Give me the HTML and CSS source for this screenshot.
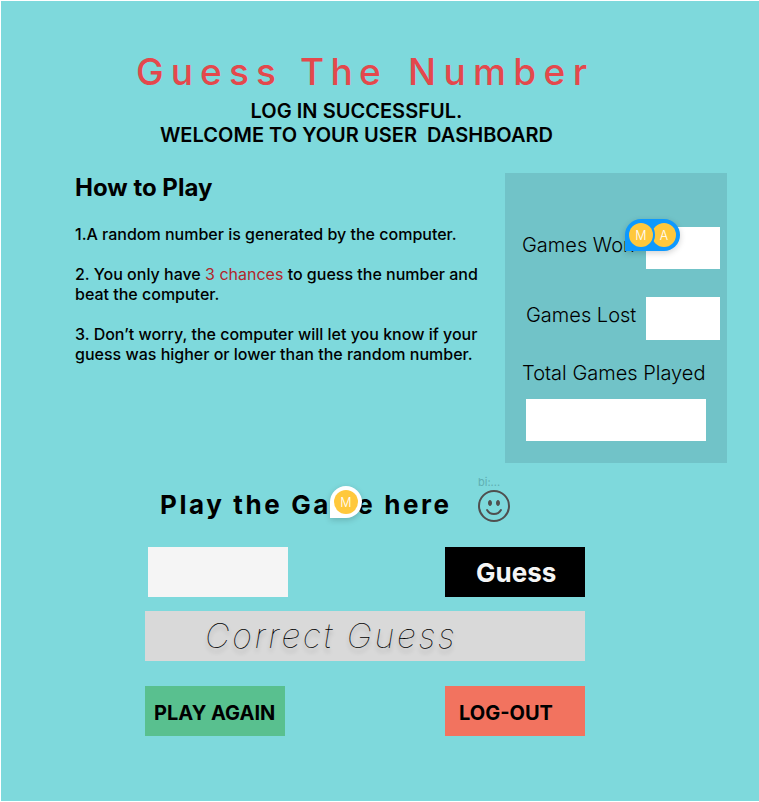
FILE: index.html
```
<!DOCTYPE html>
<html lang="en">
<head>
<meta charset="utf-8">
<title>Guess The Number</title>
<link rel="stylesheet" href="styles.css">
</head>
<body>
<div class="page">
  <header>
    <h1 class="title"><span class="w1">Guess</span><span class="w2">The</span><span class="w3">Number</span></h1>
    <p class="welcome">LOG IN SUCCESSFUL.<br>WELCOME TO YOUR USER&nbsp; DASHBOARD</p>
  </header>
  <section class="info">
    <div class="rules">
      <h2>How to Play</h2>
      <p>1.A random number is generated by the computer.</p>
      <p>2. You only have <span class="hot">3 chances</span> to guess the number and<br>beat the computer.</p>
      <p>3. Don’t worry, the computer will let you know if your<br>guess was higher or lower than the random number.</p>
    </div>
    <aside class="stats">
      <div class="stat won"><span>Games Won</span><div class="box"></div>
        <div class="pin pair"><b class="face">M</b><b class="face second">A</b></div>
      </div>
      <div class="stat lost"><span>Games Lost</span><div class="box"></div></div>
      <div class="total">Total Games Played</div>
      <div class="box wide"></div>
    </aside>
  </section>
  <section class="play">
    <div class="play-head">
      <h2>Play the Game here</h2>
      <div class="pin single"><b class="face">M</b></div>
      <div class="smile">
        <span>bi:...</span>
        <svg width="32" height="32" viewBox="0 0 16 16" fill="#4f4f4f"><path d="M8 15A7 7 0 1 1 8 1a7 7 0 0 1 0 14m0 1A8 8 0 1 0 8 0a8 8 0 0 0 0 16"/><path d="M4.285 9.567a.5.5 0 0 1 .683.183A3.5 3.5 0 0 0 8 11.5a3.5 3.5 0 0 0 3.032-1.75.5.5 0 1 1 .866.5A4.5 4.5 0 0 1 8 12.5a4.5 4.5 0 0 1-3.898-2.25.5.5 0 0 1 .183-.683M7 6.5C7 7.328 6.552 8 6 8s-1-.672-1-1.500S5.448 5 6 5s1 .672 1 1.500m4 0c0 .828-.448 1.500-1 1.500s-1-.672-1-1.500S9.448 5 10 5s1 .672 1 1.500"/></svg>
      </div>
    </div>
    <div class="row">
      <div class="entry"></div>
      <div class="btn guess">Guess</div>
    </div>
    <div class="result"><span>Correct Guess</span></div>
    <div class="row">
      <div class="btn again">PLAY AGAIN</div>
      <div class="btn logout">LOG-OUT</div>
    </div>
  </section>
</div>
</body>
</html>
```
FILE: styles.css
```
* { box-sizing: border-box; }
body { margin: 0; background: #fff; font-family: Inter, "Liberation Sans", sans-serif; color: #000; }
h1, h2, p { margin: 0; }
.page { width: 759px; height: 802px; border: solid #fff; border-width: 1px 0 1px 1px; background: #7ed9dc; overflow: hidden; }
header { height: 172px; padding-top: 48px; }
.title { display: flex; height: 48px; margin-left: 135px; font-size: 37px; line-height: 46px; font-weight: 500; color: #e4484c; white-space: nowrap; }
.w1 { width: 164px; letter-spacing: 7.1px; }
.w2 { width: 108px; letter-spacing: 6.3px; }
.w3 { letter-spacing: 7.4px; }
.welcome { width: 711px; margin-top: 2px; text-align: center; font-size: 20px; line-height: 24px; font-weight: 600; letter-spacing: .03px; white-space: nowrap; }
.info { display: flex; height: 290px; padding-left: 74px; }
.rules { width: 430px; font-size: 16px; line-height: 20px; font-weight: 500; white-space: nowrap; }
.rules h2 { height: 51px; font-size: 24px; line-height: 30px; font-weight: 700; }
.rules p { margin-bottom: 20px; }
.hot { color: #b3262b; font-weight: 400; }
.stats { width: 222px; height: 290px; padding-top: 54px; background: #71c3c8; font-size: 20px; font-weight: 300; }
.stat { position: relative; display: flex; justify-content: space-between; padding-right: 7px; line-height: 36px; white-space: nowrap; }
.won { height: 70px; padding-left: 17px; }
.lost { height: 64px; padding-left: 21px; }
.box { width: 74px; height: 42px; background: #fff; }
.lost .box { height: 43px; }
.total { height: 38px; padding-left: 17px; line-height: 24px; white-space: nowrap; }
.wide { width: 180px; margin-left: 21px; }
.pin { position: absolute; display: flex; align-items: center; height: 32px; padding: 4px; border-radius: 16px 16px 16px 0; box-shadow: 0 2px 6px rgba(0,0,0,.18); }
.pair { left: 120px; top: -8px; width: 55px; background: #0d99ff; }
.single { left: 329px; top: 23px; width: 32px; background: #fff; }
.face { position: relative; z-index: 1; flex: none; width: 24px; height: 24px; border-radius: 50%; background: #ffc83c; color: #fff; font-size: 12.5px; line-height: 25px; font-weight: 300; text-align: center; }
.second { z-index: 0; margin-left: -1px; }
.pair .face:first-child { box-shadow: 0 0 0 2px #0d99ff; }
.play-head { position: relative; display: flex; height: 84px; padding-left: 159px; }
.play-head h2 { width: 318px; padding-top: 26px; font-size: 26px; line-height: 32px; font-weight: 700; letter-spacing: 2.6px; white-space: nowrap; }
.smile { padding-top: 13px; font-size: 11px; line-height: 12px; color: #5fafb3; }
.smile span { display: block; height: 14px; }
.smile svg { display: block; }
.row { display: flex; justify-content: space-between; width: 440px; margin-left: 144px; }
.entry { width: 140px; height: 50px; margin-left: 3px; background: #f5f5f5; }
.btn { width: 140px; height: 50px; font-size: 20px; line-height: 54px; font-weight: 700; white-space: nowrap; }
.guess { padding-left: 31px; background: #000; color: #f5f5f5; font-size: 26px; line-height: 52px; }
.result { width: 440px; height: 50px; margin: 14px 0 25px 144px; padding-left: 60px; background: #d9d9d9; font-size: 34px; line-height: 50px; font-weight: 100; font-style: italic; letter-spacing: 2.65px; white-space: nowrap; text-shadow: 0 4px 4px rgba(0,0,0,.25); }
.again { padding-left: 9px; background: #59c08f; }
.logout { padding-left: 14px; background: #f2735f; }
```
